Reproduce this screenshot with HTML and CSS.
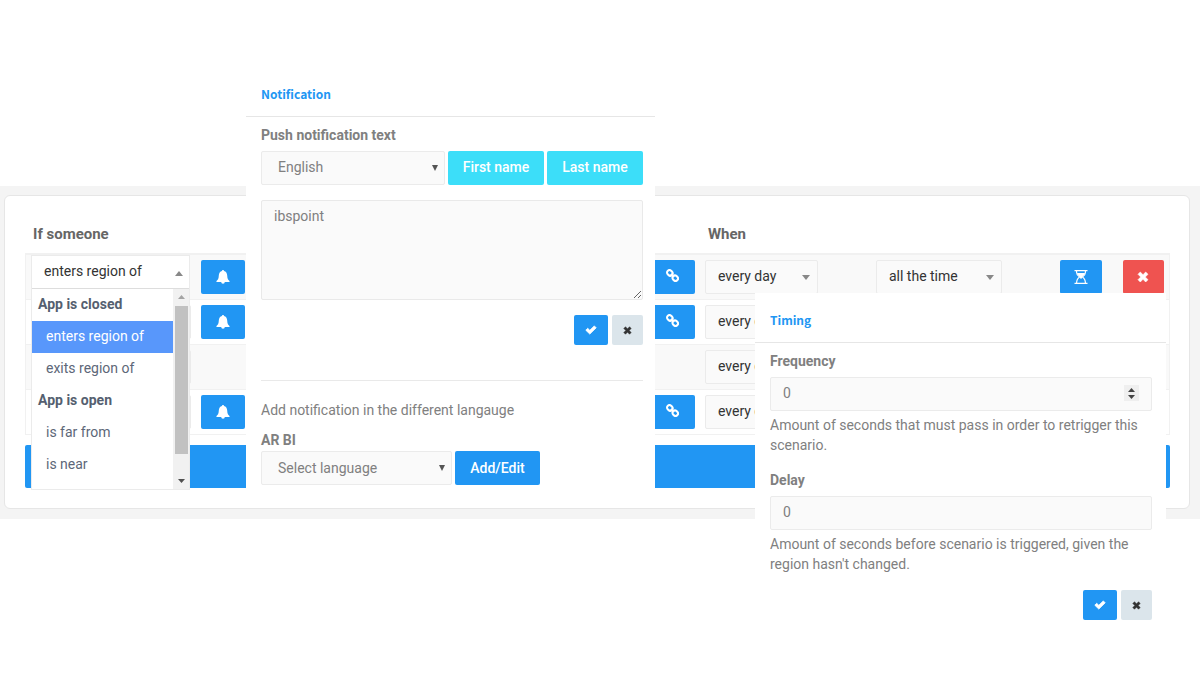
FILE: index.html
```html
<!DOCTYPE html>
<html lang="en">
<head>
<meta charset="utf-8">
<title>Scenarios</title>
<link rel="stylesheet" href="styles.css">
</head>
<body>
<svg class="defs" aria-hidden="true">
  <symbol id="bell" viewBox="0 0 14 14"><path d="M7 0c.6 0 1 .4 1 1 2 .5 3.100 2.200 3.200 4.500.1 3 .8 4.300 2.300 5.500.3.500 0 1-.6 1H8.800a1.800 1.800 0 0 1-3.600 0H1.100c-.6 0-.9-.5-.6-1 1.500-1.200 2.200-2.500 2.300-5.500C2.900 3.200 4 1.500 6 1c0-.6.4-1 1-1z"/></symbol>
  <symbol id="link" viewBox="0 0 14 14"><g fill="none" stroke="currentColor" stroke-width="2.200"><rect x="1" y="1.600" width="6.200" height="5.200" rx="2.500" transform="rotate(45 4.100 4.200)"/><rect x="6.800" y="7.200" width="6.200" height="5.200" rx="2.500" transform="rotate(45 9.900 9.800)"/><path d="M5.300 5.300l3.400 3.400"/></g></symbol>
  <symbol id="hourglass" viewBox="0 0 14 14"><path d="M.5 0h13v1.300h-13zM.5 12.700h13V14h-13z"/><path d="M2.600 1v1.500C2.600 4.500 4 6 5.600 7 4 8 2.600 9.500 2.600 13M11.400 1v1.500c0 2-1.400 3.500-3 4.500 1.600 1 3 2.500 3 6" fill="none" stroke="currentColor" stroke-width="1.200"/><path d="M3 3h8c-.4 1.700-1.500 3-3 4v1.500H6V7C4.500 6 3.400 4.700 3 3z"/></symbol>
  <symbol id="cross" viewBox="0 0 12 12"><path d="M3.300 1L6 3.700 8.700 1 11 3.300 8.300 6 11 8.700 8.700 11 6 8.300 3.300 11 1 8.700 3.700 6 1 3.300z" stroke="currentColor" stroke-width=".6" stroke-linejoin="round"/></symbol>
  <symbol id="check" viewBox="0 0 12 12"><path d="M.8 6.200L2.700 4.300 4.800 6.300 9.300 1.900l1.900 1.900-6.400 6.300z" stroke="currentColor" stroke-width=".8" stroke-linejoin="round"/></symbol>
  <symbol id="down" viewBox="0 0 8 5" preserveAspectRatio="none"><path d="M0 0h8L4 5z"/></symbol>
  <symbol id="up" viewBox="0 0 8 5" preserveAspectRatio="none"><path d="M0 5h8L4 0z"/></symbol>
  <symbol id="spinner" viewBox="0 0 15 16"><path d="M0 0h15v16H0z" fill="#efefef"/><path d="M4 7h7L7.500 3zM4 10h7l-3.500 4z" fill="#444"/></symbol>
</svg>

<main class="page">
  <section class="band">
    <div class="card">
      <table class="rules">
        <colgroup><col class="c-who"><col><col class="c-link"><col class="c-day"><col class="c-time"><col class="c-wait"><col class="c-del"></colgroup>
        <thead>
          <tr><th colspan="3">If someone</th><th colspan="4">When</th></tr>
        </thead>
        <tbody>
          <tr>
            <td class="who">
              <div class="dropdown">
                <button class="dropdown-value" type="button" aria-expanded="true">enters region of <svg class="caret"><use href="#up"/></svg></button>
                <div class="dropdown-body">
                  <ul class="options" role="listbox" aria-label="If someone">
                    <li class="group">App is closed</li>
                    <li class="option active" role="option" aria-selected="true">enters region of</li>
                    <li class="option" role="option">exits region of</li>
                    <li class="group">App is open</li>
                    <li class="option" role="option">is far from</li>
                    <li class="option" role="option">is near</li>
                  </ul>
                  <div class="scrollbar"><svg class="scroll-up"><use href="#up"/></svg><div class="thumb"></div><svg class="scroll-down"><use href="#down"/></svg></div>
                </div>
              </div>
            </td>
            <td><button class="btn bell" type="button" aria-label="Notification"><svg class="icon"><use href="#bell"/></svg></button></td>
            <td><button class="btn link" type="button" aria-label="Link"><svg class="icon"><use href="#link"/></svg></button></td>
            <td><div class="pick day"><select aria-label="Day"><option>every day</option></select><svg class="caret"><use href="#down"/></svg></div></td>
            <td><div class="pick time"><select aria-label="Time"><option>all the time</option></select><svg class="caret"><use href="#down"/></svg></div></td>
            <td><button class="btn" type="button" aria-label="Timing"><svg class="icon"><use href="#hourglass"/></svg></button></td>
            <td><button class="btn danger" type="button" aria-label="Delete"><svg class="icon"><use href="#cross"/></svg></button></td>
          </tr>
          <tr>
            <td><div class="pick who-pick"><select aria-label="If someone"></select></div></td>
            <td><button class="btn bell" type="button" aria-label="Notification"><svg class="icon"><use href="#bell"/></svg></button></td>
            <td><button class="btn link" type="button" aria-label="Link"><svg class="icon"><use href="#link"/></svg></button></td>
            <td><div class="pick day"><select aria-label="Day"><option>every day</option></select></div></td>
            <td></td><td></td><td></td>
          </tr>
          <tr>
            <td><div class="pick who-pick"><select aria-label="If someone"></select></div></td>
            <td></td><td></td>
            <td><div class="pick day"><select aria-label="Day"><option>every day</option></select></div></td>
            <td></td><td></td><td></td>
          </tr>
          <tr>
            <td><div class="pick who-pick"><select aria-label="If someone"></select></div></td>
            <td><button class="btn bell" type="button" aria-label="Notification"><svg class="icon"><use href="#bell"/></svg></button></td>
            <td><button class="btn link" type="button" aria-label="Link"><svg class="icon"><use href="#link"/></svg></button></td>
            <td><div class="pick day"><select aria-label="Day"><option>every day</option></select></div></td>
            <td></td><td></td><td></td>
          </tr>
        </tbody>
      </table>
      <button class="add-bar" type="button" aria-label="Add"></button>
    </div>
  </section>

  <section class="popup notification">
    <h2 class="popup-title">Notification</h2>
    <div class="popup-body">
      <label class="label" for="text">Push notification text</label>
      <div class="row">
        <div class="pick field"><select aria-label="Language"><option>English</option></select><svg class="caret small"><use href="#down"/></svg></div>
        <button class="btn cyan" type="button">First name</button>
        <button class="btn cyan" type="button">Last name</button>
      </div>
      <textarea class="text" id="text">ibspoint</textarea>
      <div class="actions">
        <button class="btn ok" type="button" aria-label="Confirm"><svg class="icon"><use href="#check"/></svg></button>
        <button class="btn cancel" type="button" aria-label="Cancel"><svg class="icon"><use href="#cross"/></svg></button>
      </div>
      <hr class="rule">
      <p class="hint">Add notification in the different langauge</p>
      <label class="label lang" for="language">AR BI</label>
      <div class="row">
        <div class="pick field language"><select id="language"><option>Select language</option></select><svg class="caret small"><use href="#down"/></svg></div>
        <button class="btn edit" type="button">Add/Edit</button>
      </div>
    </div>
  </section>

  <section class="popup timing">
    <h2 class="popup-title">Timing</h2>
    <div class="popup-body">
      <label class="label" for="frequency">Frequency</label>
      <div class="number">
        <input class="input" id="frequency" type="number" value="0">
        <svg class="spinner"><use href="#spinner"/></svg>
      </div>
      <p class="hint">Amount of seconds that must pass in order to retrigger this scenario.</p>
      <label class="label next" for="delay">Delay</label>
      <input class="input" id="delay" type="number" value="0">
      <p class="hint">Amount of seconds before scenario is triggered, given the region hasn't changed.</p>
      <div class="actions">
        <button class="btn ok" type="button" aria-label="Confirm"><svg class="icon"><use href="#check"/></svg></button>
        <button class="btn cancel" type="button" aria-label="Cancel"><svg class="icon"><use href="#cross"/></svg></button>
      </div>
    </div>
  </section>
</main>
</body>
</html>
```
FILE: styles.css
```css
* { box-sizing: border-box; }
body { margin: 0; background: #fff; color: #808080; font: 14px/20px Roboto, sans-serif; }
button, select, input, textarea { font: inherit; margin: 0; }
h2, p, ul { margin: 0; padding: 0; }
.defs { position: absolute; width: 0; height: 0; }
svg { display: block; fill: currentColor; }

.page { position: relative; padding-top: 186px; min-height: 100vh; }
.band { background: #f4f4f4; padding: 9px 10px 10px 4px; }
.card { background: #fff; border: 1px solid #e6e6e6; border-radius: 6px; padding: 18px 19px 20px 20px; }

.rules { width: 100%; table-layout: fixed; border-collapse: separate; border-spacing: 0; }
.c-who { width: 170px; }
.c-link { width: 52px; }
.c-day { width: 171px; }
.c-time { width: 184px; }
.c-wait { width: 63px; }
.c-del { width: 53px; }
.rules th { height: 41px; padding: 0 8px; border-bottom: 2px solid #f1f1f1; text-align: left; font-size: 15px; font-weight: 700; color: #666; }
.rules th + th { padding-left: 9px; }
.rules td { height: 45px; padding: 0 0 0 6px; border-bottom: 1px solid #f1f1f1; }
.rules td:first-child { padding-left: 5px; border-left: 1px solid #f1f1f1; }
.rules td:last-child { border-right: 1px solid #f1f1f1; }
.rules tbody tr:nth-child(odd) td { background: #f9f9f9; }
.who { position: relative; vertical-align: top; }

.pick { position: relative; }
.pick select { appearance: none; display: block; width: 100%; height: 34px; padding: 0 12px 2px; border: 1px solid #ebebeb; border-radius: 2px; background: #fafafa; color: #333; }
.who-pick { width: 160px; }
.day { width: 113px; }
.time { width: 126px; }
.caret { position: absolute; right: 8px; top: 15px; width: 8px; height: 5px; color: #888; pointer-events: none; }
.caret.small { right: 7px; top: 14px; width: 6px; height: 6px; color: #555; }

.btn { display: flex; align-items: center; justify-content: center; height: 34px; width: 42px; padding: 0; border: 0; border-radius: 2px; background: #2196f3; color: #fff; font-weight: 500; }
.btn.bell { width: 44px; }
.btn.link { padding: 0 2px 4px 0; }
.link .icon { width: 13px; height: 13px; }
.btn.danger { width: 41px; background: #ef5350; }
.icon { width: 14px; height: 14px; }
.danger .icon { width: 12px; height: 12px; }

.add-bar { display: block; width: 100%; height: 43px; margin-top: 10px; border: 0; border-radius: 2px; background: #2196f3; }

.dropdown { position: absolute; left: 5px; top: 0; width: 159px; background: #fff; border: 1px solid #ebebeb; z-index: 1; }
.dropdown-value { display: block; width: 100%; height: 32px; padding: 0 12px 2px; border: 0; background: #fff; color: #333; text-align: left; }
.dropdown .caret { right: 6px; }
.dropdown-body { display: flex; height: 201px; border-top: 1px solid #ddd; }
.options { flex: 1; list-style: none; color: #5d6778; }
.group, .option { height: 32px; line-height: 30px; padding-left: 6px; }
.group { font-weight: 700; color: #555f70; }
.option { padding-left: 14px; }
.option.active { background: #5897fb; color: #fff; }
.scrollbar { display: flex; flex-direction: column; justify-content: space-between; align-items: center; width: 16px; padding: 6px 0; background: #f1f1f1; }
.scroll-up, .scroll-down { width: 7px; height: 4px; color: #a3a3a3; }
.scroll-down { color: #505050; }
.thumb { width: 13px; height: 148px; margin-bottom: 18px; background: #c1c1c1; }

.popup { position: absolute; background: #fff; z-index: 2; }
.notification { left: 246px; top: 67px; width: 409px; padding-bottom: 20px; }
.timing { left: 755px; top: 293px; width: 411px; padding-bottom: 20px; }
.popup-title { height: 50px; padding: 4px 15px 0; border-bottom: 1px solid #e6e6e6; font: 700 12px/46px "Noto Sans CJK SC", sans-serif; color: #2196f3; }
.popup-body { padding: 8px 12px 0 15px; }
.timing .popup-body { padding-right: 14px; }
.label { display: block; margin-bottom: 6px; font-weight: 700; }
.label.lang { margin: 10px 0 1px; }
.label.next { margin-top: 15px; }
.row { display: flex; gap: 3px; }
.field { flex: 1; }
.language { flex: 0 0 191px; }
.pick.field select { padding-left: 16px; color: #808080; }
.pick.language select { padding-bottom: 0; }
.btn.cyan { width: 96px; padding-bottom: 2px; background: #3cdef9; }
.btn.edit { width: 85px; }
.text { display: block; width: 100%; height: 100px; margin-top: 15px; padding: 5px 12px; border: 1px solid #e9e9e9; border-radius: 2px; background: #fafafa; color: #808080; resize: vertical; }
.actions { display: flex; justify-content: flex-end; gap: 4px; margin-top: 15px; }
.timing .actions { margin-top: 16px; }
.btn.ok { width: 34px; height: 30px; }
.btn.cancel { width: 31px; height: 30px; background: #dbe5eb; color: #333; }
.ok .icon { width: 12px; height: 12px; }
.cancel .icon { width: 9px; height: 9px; }
.rule { margin: 35px 0 19px; border: 0; border-top: 1px solid #e9e9e9; }
.number { position: relative; }
.spinner { position: absolute; right: 13px; top: 8px; width: 15px; height: 16px; pointer-events: none; }
.input { display: block; width: 100%; height: 34px; margin-bottom: 4px; padding: 0 12px 2px; border: 1px solid #ebebeb; border-radius: 2px; background: #fafafa; color: #808080; appearance: textfield; }
```
